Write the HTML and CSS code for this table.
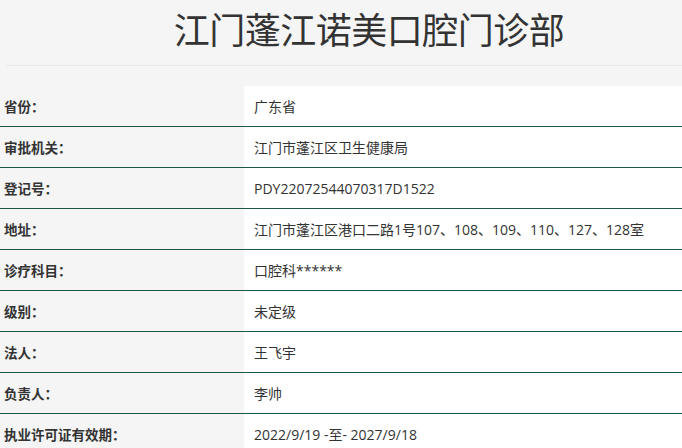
FILE: index.html
```html
<!DOCTYPE html>
<html lang="zh">
<head>
<meta charset="utf-8">
<title>江门蓬江诺美口腔门诊部</title>
<link rel="stylesheet" href="styles.css">
</head>
<body>
<div class="page">
  <header class="head">
    <h1 class="title">江门蓬江诺美口腔门诊部</h1>
  </header>
  <div class="info">
    <div class="row"><div class="label">省份：</div><div class="value">广东省</div></div>
    <div class="row"><div class="label">审批机关：</div><div class="value">江门市蓬江区卫生健康局</div></div>
    <div class="row"><div class="label">登记号：</div><div class="value">PDY22072544070317D1522</div></div>
    <div class="row"><div class="label">地址：</div><div class="value">江门市蓬江区港口二路1号107、108、109、110、127、128室</div></div>
    <div class="row"><div class="label">诊疗科目：</div><div class="value">口腔科******</div></div>
    <div class="row"><div class="label">级别：</div><div class="value">未定级</div></div>
    <div class="row"><div class="label">法人：</div><div class="value">王飞宇</div></div>
    <div class="row"><div class="label">负责人：</div><div class="value">李帅</div></div>
    <div class="row"><div class="label">执业许可证有效期：</div><div class="value">2022/9/19 -至- 2027/9/18</div></div>
  </div>
</div>
</body>
</html>
```
FILE: styles.css
```css
html, body {
  margin: 0;
  padding: 0;
  background: #f5f5f5;
}
body {
  font-family: "Open Sans", "Noto Sans CJK SC", sans-serif;
  color: #333;
}
.page {
  display: flex;
  flex-direction: column;
}
.head {
  margin: 0 0 20px 6px;
  border-bottom: 1px solid #e8e8e8;
  height: 65px;
  display: flex;
  justify-content: center;
}
.title {
  margin: 0;
  padding-top: 3px;
  font-family: "Noto Sans CJK SC", sans-serif;
  font-weight: 400;
  font-size: 36px;
  line-height: 50px;
  color: #333;
  letter-spacing: -0.5px;
  transform: translateX(25px);
}
.info {
  display: flex;
  flex-direction: column;
}
.row {
  display: grid;
  grid-template-columns: 244px 1fr;
  height: 40px;
  border-bottom: 1px solid #1b5a3e;
}
.label {
  display: flex;
  align-items: center;
  padding-left: 4px;
  font-size: 13.5px;
  font-weight: 700;
  color: #333;
}
.value {
  display: flex;
  align-items: center;
  padding-left: 10px;
  background: #fff;
  font-size: 14px;
  color: #333;
}
```
